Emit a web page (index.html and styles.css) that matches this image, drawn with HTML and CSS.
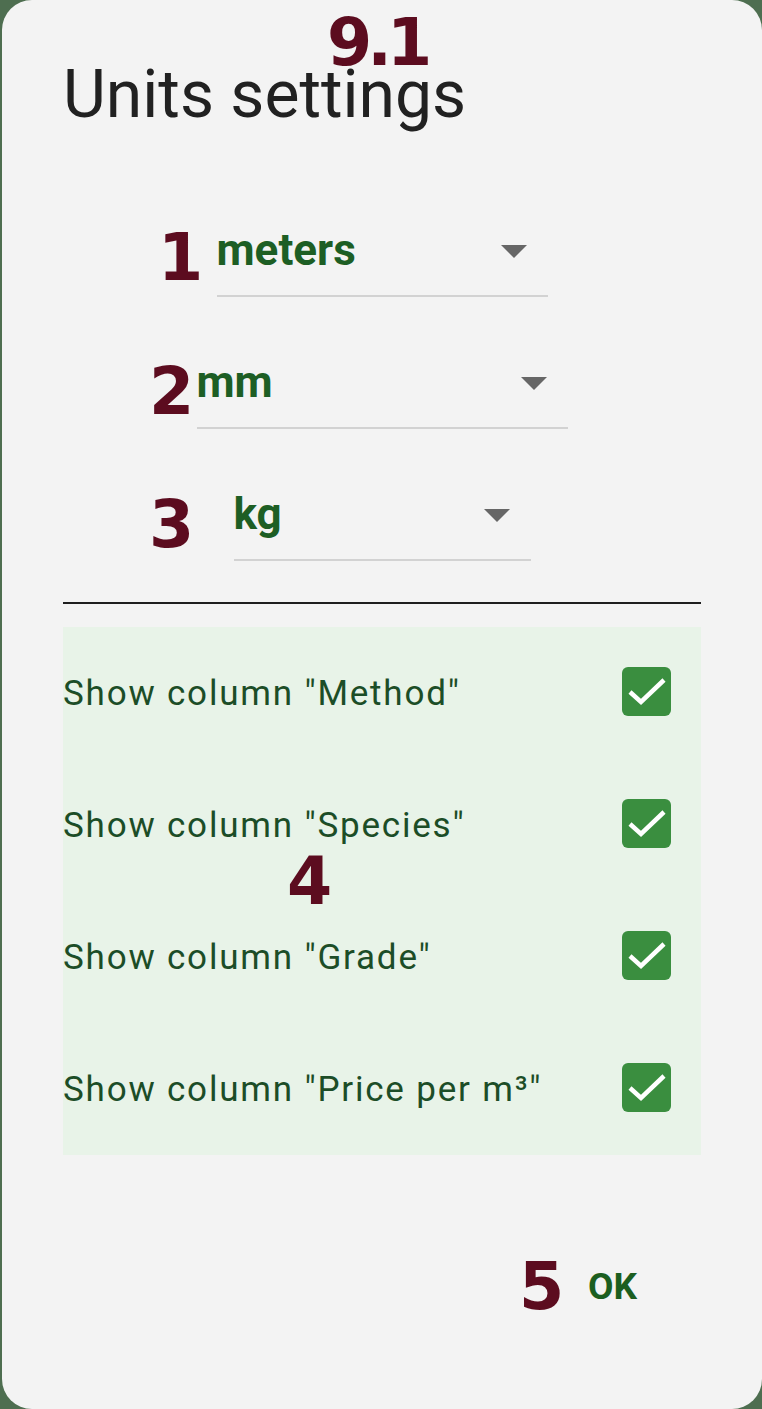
FILE: index.html
```html
<!DOCTYPE html>
<html lang="en">
<head>
<meta charset="utf-8">
<title>Units settings</title>
<link rel="stylesheet" href="styles.css">
</head>
<body>
<div class="dialog">
  <h1 class="title">Units settings</h1>

  <div class="fields">
    <div class="dropdown w-length">
      <span class="value">meters</span>
      <svg class="arrow" width="26" height="13" viewBox="0 0 26 13"><polygon points="0,0 26,0 13,13" fill="#666666"/></svg>
    </div>
    <div class="dropdown w-small">
      <span class="value">mm</span>
      <svg class="arrow" width="26" height="13" viewBox="0 0 26 13"><polygon points="0,0 26,0 13,13" fill="#666666"/></svg>
    </div>
    <div class="dropdown w-mass">
      <span class="value">kg</span>
      <svg class="arrow" width="26" height="13" viewBox="0 0 26 13"><polygon points="0,0 26,0 13,13" fill="#666666"/></svg>
    </div>
  </div>

  <hr class="divider">

  <ul class="columns">
    <li class="row">
      <span class="label">Show column "Method"</span>
      <span class="check"><svg width="49" height="49" viewBox="0 0 49 49"><polyline points="8,25 19,35 42,13" fill="none" stroke="#ffffff" stroke-width="4.5"/></svg></span>
    </li>
    <li class="row">
      <span class="label">Show column "Species"</span>
      <span class="check"><svg width="49" height="49" viewBox="0 0 49 49"><polyline points="8,25 19,35 42,13" fill="none" stroke="#ffffff" stroke-width="4.5"/></svg></span>
    </li>
    <li class="row">
      <span class="label">Show column "Grade"</span>
      <span class="check"><svg width="49" height="49" viewBox="0 0 49 49"><polyline points="8,25 19,35 42,13" fill="none" stroke="#ffffff" stroke-width="4.5"/></svg></span>
    </li>
    <li class="row">
      <span class="label">Show column "Price per m³"</span>
      <span class="check"><svg width="49" height="49" viewBox="0 0 49 49"><polyline points="8,25 19,35 42,13" fill="none" stroke="#ffffff" stroke-width="4.5"/></svg></span>
    </li>
  </ul>

  <div class="actions">
    <button class="ok">OK</button>
  </div>

  <span class="tag tag-title">9.1</span>
  <span class="tag tag-1">1</span>
  <span class="tag tag-2">2</span>
  <span class="tag tag-3">3</span>
  <span class="tag tag-4">4</span>
  <span class="tag tag-5">5</span>
</div>
</body>
</html>
```
FILE: styles.css
```css
html, body {
  margin: 0;
  padding: 0;
}

body {
  background: #4e6e50;
  width: 762px;
  height: 1409px;
  overflow: hidden;
}

.dialog {
  position: relative;
  box-sizing: border-box;
  width: 760px;
  height: 1409px;
  margin-left: 2px;
  padding: 62px 61px 0 61px;
  background: #f3f3f3;
  border-radius: 30px;
  font-family: Roboto, "Liberation Sans", sans-serif;
}

.title {
  margin: 0;
  font-size: 66px;
  line-height: 66px;
  font-weight: 400;
  color: #212121;
}

.fields {
  margin-top: 90px;
  display: flex;
  flex-direction: column;
  align-items: center;
  gap: 53px;
}

.dropdown {
  box-sizing: content-box;
  display: flex;
  align-items: center;
  justify-content: space-between;
  height: 64px;
  padding: 0 21px 13px 0;
  border-bottom: 2px solid #d2d2d2;
}

.w-length { width: 310px; }
.w-small { width: 350px; }
.w-mass { width: 276px; }

.value {
  font-size: 44px;
  line-height: 64px;
  font-weight: 700;
  color: #1d5e24;
}

.arrow {
  display: block;
  margin-top: 2px;
}

.divider {
  margin: 41px 0 0 0;
  height: 2px;
  border: 0;
  background: #1e1e1e;
}

.columns {
  list-style: none;
  margin: 23px 0 0 0;
  padding: 0;
  background: #e8f3e8;
}

.row {
  display: flex;
  align-items: center;
  justify-content: space-between;
  height: 132px;
  padding-right: 30px;
}

.label {
  font-size: 35px;
  letter-spacing: 1.8px;
  color: #1c4d27;
}

.check {
  display: block;
  width: 49px;
  height: 49px;
  margin-top: -4px;
  border-radius: 6px;
  background: #3a8e3f;
}

.check svg {
  display: block;
}

.actions {
  display: flex;
  justify-content: flex-end;
  margin-top: 110px;
  padding-right: 48px;
}

.ok {
  border: 0;
  background: transparent;
  padding: 0 16px;
  height: 44px;
  font-family: Roboto, "Liberation Sans", sans-serif;
  font-size: 37px;
  line-height: 44px;
  font-weight: 700;
  color: #1b5e20;
}

.tag {
  position: absolute;
  font-family: "DejaVu Sans", sans-serif;
  font-weight: 700;
  font-size: 65px;
  line-height: 1;
  color: #5c0c1f;
}

.tag-title { left: 325px; top: 10px; letter-spacing: -5px; }
.tag-1 { left: 156px; top: 225px; }
.tag-2 { left: 147px; top: 359px; }
.tag-3 { left: 147px; top: 492px; }
.tag-4 { left: 285px; top: 849px; }
.tag-5 { left: 517px; top: 1254px; }
```
